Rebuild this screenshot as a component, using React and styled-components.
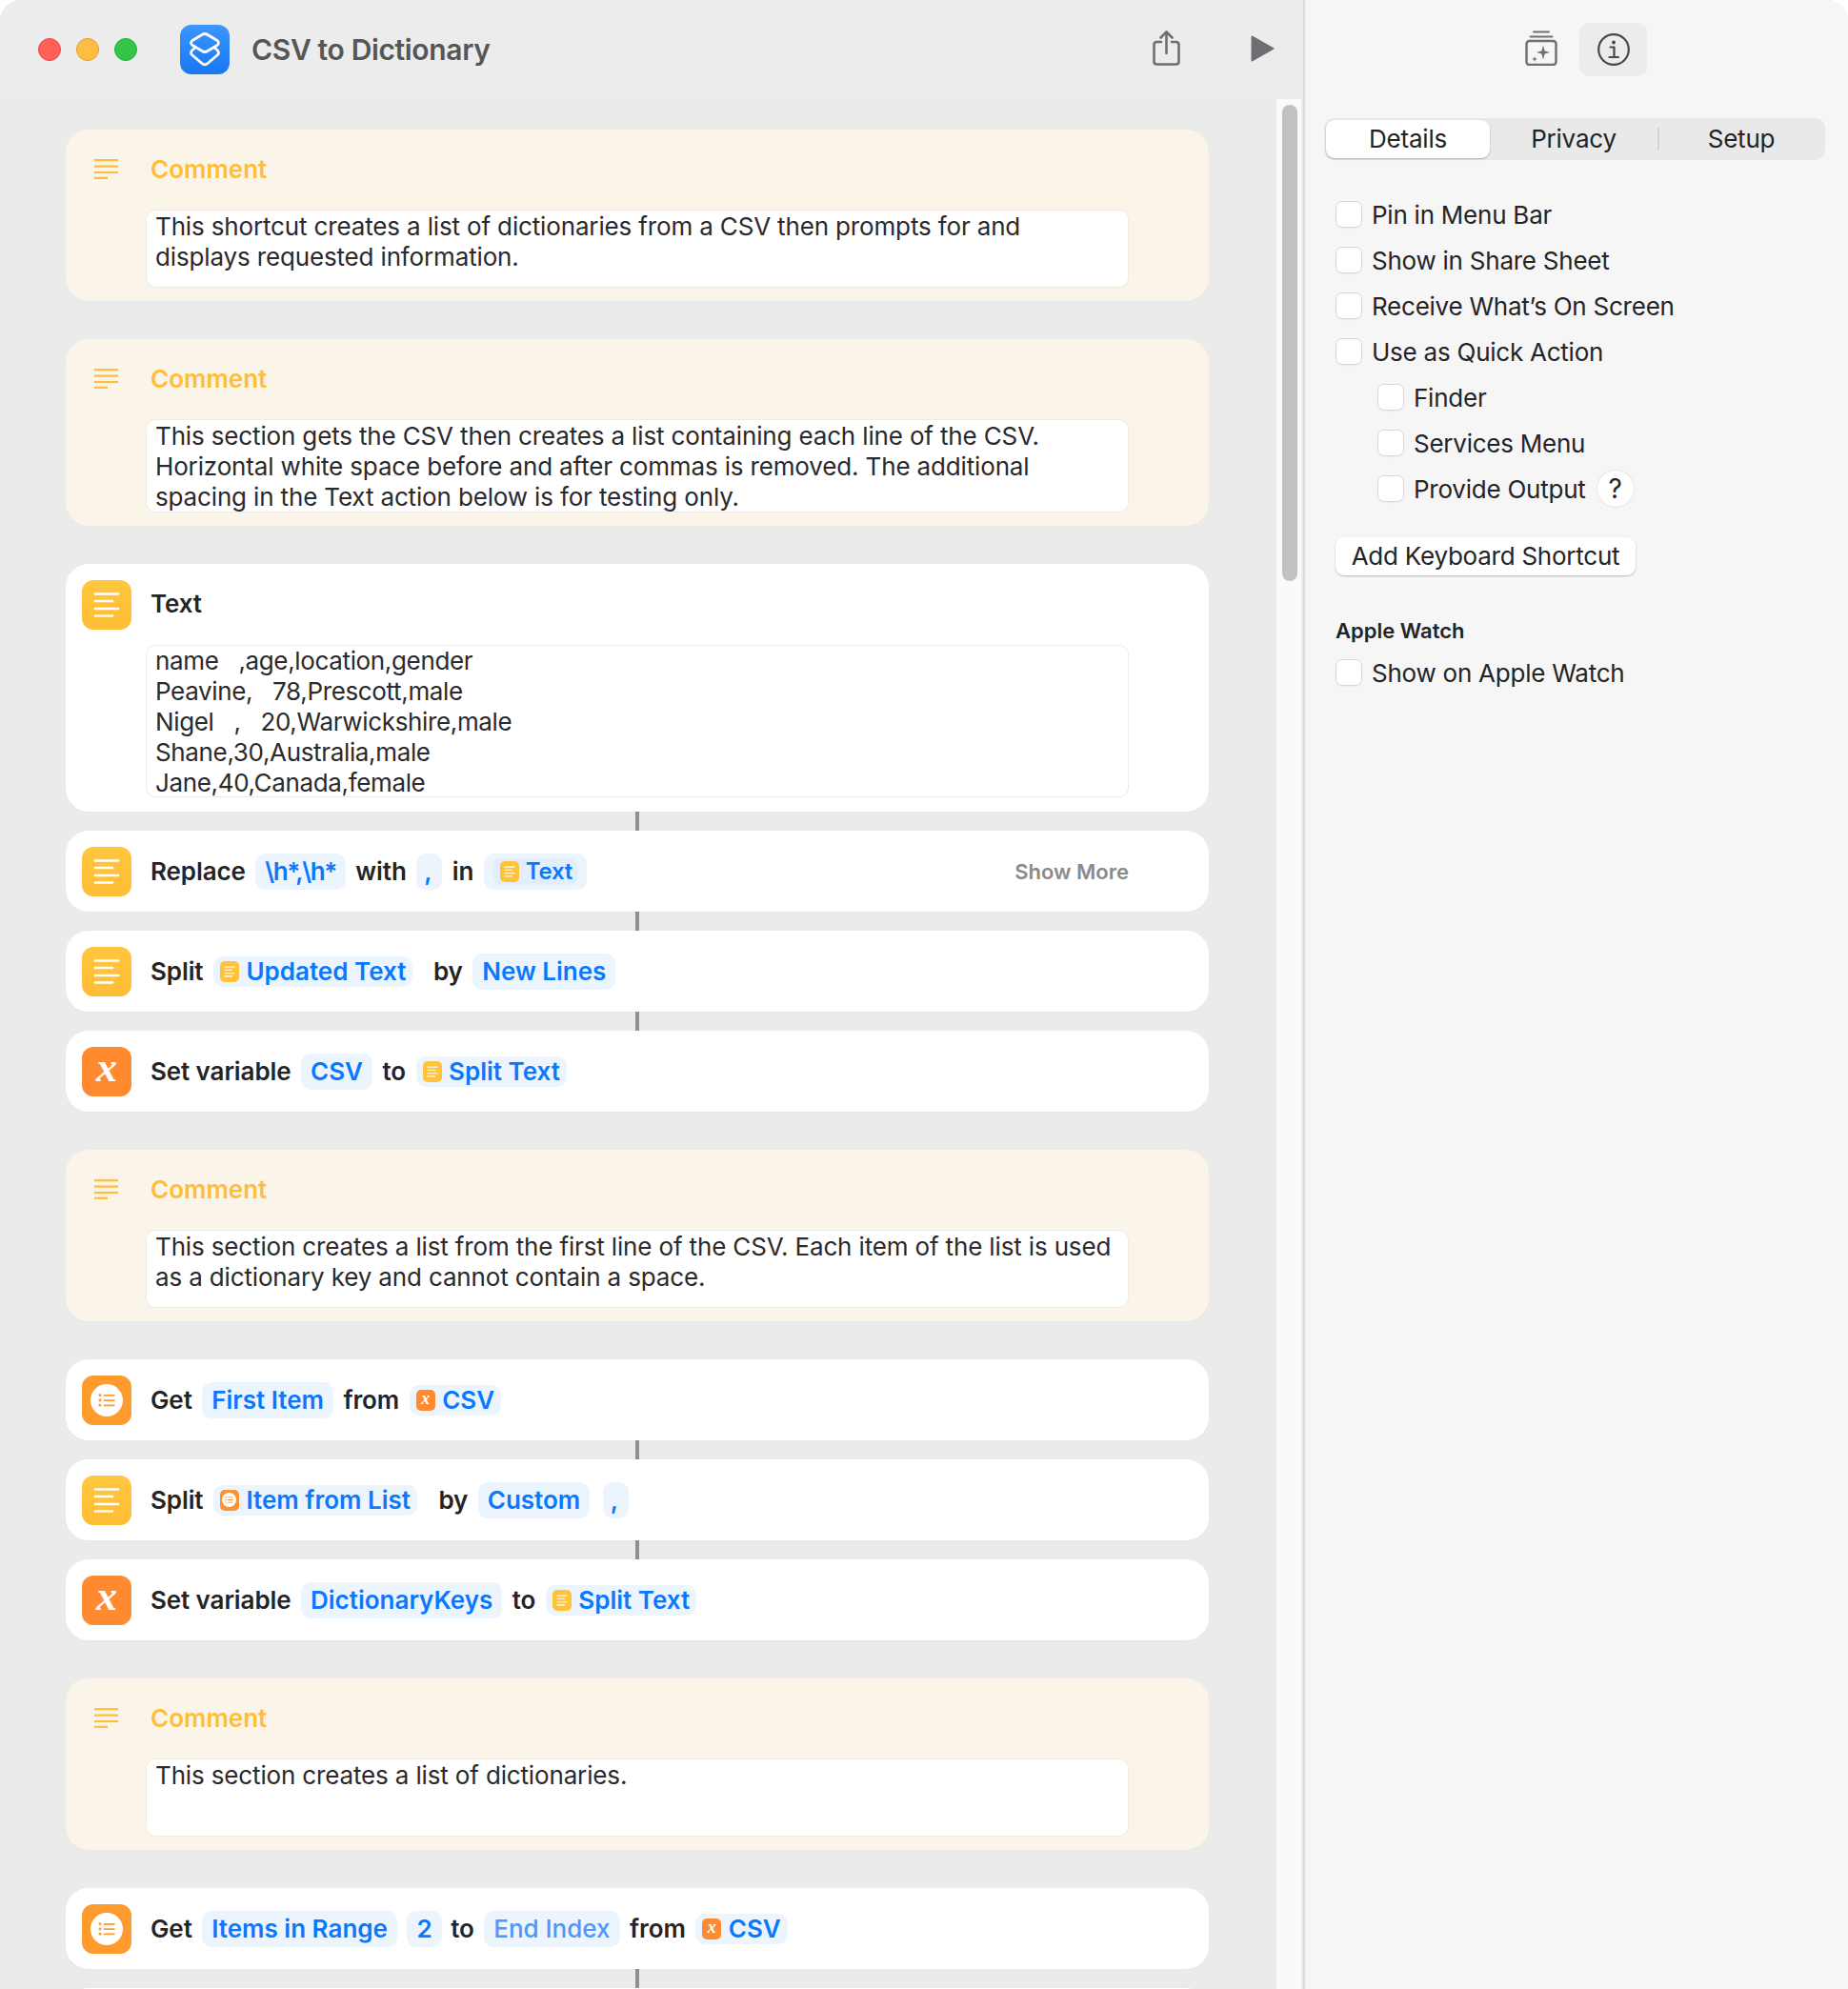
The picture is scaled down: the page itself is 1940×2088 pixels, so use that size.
import React from 'react'
import styled, { createGlobalStyle } from 'styled-components'

const GlobalStyle = createGlobalStyle`
  html, body {
    margin: 0;
    padding: 0;
    background: #fff;
  }
  * {
    box-sizing: border-box;
  }
`

const LinesGlyph = () => (
  <svg viewBox="0 0 28 26" width="100%" height="100%">
    <g stroke="currentColor" strokeWidth="2.6" strokeLinecap="round">
      <line x1="2" y1="1.5" x2="26" y2="1.5" />
      <line x1="2" y1="9" x2="20" y2="9" />
      <line x1="2" y1="17" x2="26" y2="17" />
      <line x1="2" y1="24.5" x2="20" y2="24.5" />
    </g>
  </svg>
)

const CommentLines = () => (
  <svg viewBox="0 0 25 21" width="25" height="21">
    <g stroke="currentColor" strokeWidth="2.2">
      <line x1="0" y1="1.2" x2="25" y2="1.2" />
      <line x1="0" y1="7.6" x2="25" y2="7.6" />
      <line x1="0" y1="14" x2="25" y2="14" />
      <line x1="0" y1="19.8" x2="14" y2="19.8" />
    </g>
  </svg>
)

const ListGlyph = () => (
  <svg viewBox="0 0 20 16" width="100%" height="100%">
    <g fill="currentColor">
      <circle cx="2" cy="2" r="1.7" />
      <circle cx="2" cy="8" r="1.7" />
      <circle cx="2" cy="14" r="1.7" />
      <rect x="6" y="1" width="14" height="2" rx="1" />
      <rect x="6" y="7" width="14" height="2" rx="1" />
      <rect x="6" y="13" width="14" height="2" rx="1" />
    </g>
  </svg>
)

function ActionIcon({ kind }) {
  if (kind === 'var') return <VarIcon>x</VarIcon>
  if (kind === 'list') {
    return (
      <ListIcon>
        <ListDisc><ListGlyph /></ListDisc>
      </ListIcon>
    )
  }
  return (
    <TextIcon>
      <TextLines><LinesGlyph /></TextLines>
    </TextIcon>
  )
}

function MiniIcon({ kind }) {
  if (kind === 'var') return <MiniVar>x</MiniVar>
  if (kind === 'list') {
    return (
      <MiniList>
        <MiniDisc><ListGlyph /></MiniDisc>
      </MiniList>
    )
  }
  return (
    <MiniText>
      <MiniLines><LinesGlyph /></MiniLines>
    </MiniText>
  )
}

function VarPill({ icon, after, children }) {
  return (
    <Pill $after={after}>
      <MiniIcon kind={icon} />
      {children}
    </Pill>
  )
}

function Comment({ children }) {
  return (
    <CommentCard>
      <CommentHead>
        <CommentGlyph><CommentLines /></CommentGlyph>
        <CommentTitle>Comment</CommentTitle>
      </CommentHead>
      <TextBox>{children}</TextBox>
    </CommentCard>
  )
}

function Action({ icon, children }) {
  return (
    <ActionCard>
      <ActionIcon kind={icon} />
      {children}
    </ActionCard>
  )
}

function Option({ indent, children, help }) {
  return (
    <OptionRow $indent={indent}>
      <Checkbox />
      <span>{children}</span>
      {help && <HelpButton>?</HelpButton>}
    </OptionRow>
  )
}

export default function App() {
  return (
    <Window>
      <GlobalStyle />
      <Main>
        <Toolbar>
          <Light $color="#ff6058" $border="#e14942" />
          <Light $color="#ffbd44" $border="#dfa023" />
          <Light $color="#34c44a" $border="#28a83a" />
          <AppIcon>
            <svg viewBox="0 0 52 52" width="52" height="52" fill="none" stroke="#fff" strokeWidth="2.8" strokeLinejoin="round" strokeLinecap="round">
              <path d="M23 10.5Q26 8.5 29 10.5L39 16.5Q42 19 39 21.5L29 27.5Q26 29.5 23 27.5L13 21.5Q10 19 13 16.5Z" />
              <path d="M16 24L13 26.5Q10 29.5 13 32L23 40.5Q26 43 29 40.5L39 32Q42 29.5 39 26.5L36 24" />
            </svg>
          </AppIcon>
          <Title>CSV to Dictionary</Title>
          <ShareButton>
            <svg viewBox="0 0 29 37" width="29" height="37" fill="none" stroke="#6e6e73" strokeWidth="2.6" strokeLinecap="round" strokeLinejoin="round">
              <path d="M14.5 24V2M8.5 7.5L14.5 1.5L20.5 7.5" />
              <path d="M9 12H4.5Q1.5 12 1.5 15V32.5Q1.5 35.5 4.5 35.5H24.5Q27.5 35.5 27.5 32.5V15Q27.5 12 24.5 12H20" />
            </svg>
          </ShareButton>
          <PlayButton>
            <svg viewBox="0 0 25 28" width="25" height="28" fill="#6e6e73" stroke="#6e6e73" strokeWidth="2" strokeLinejoin="round">
              <path d="M1.5 1.5L23.5 14L1.5 26.5Z" />
            </svg>
          </PlayButton>
        </Toolbar>
        <Body>
          <List>
            <Comment>This shortcut creates a list of dictionaries from a CSV then prompts for and displays requested information.</Comment>
            <Comment>
              This section gets the CSV then creates a list containing each line of the CSV. Horizontal white space before and after commas is removed. The additional spacing in the Text action below is for testing only.
            </Comment>
            <Group>
              <TextCard>
                <TextCardHead>
                  <ActionIcon kind="text" />
                  <Word>Text</Word>
                </TextCardHead>
                <TextBox>
                  name&nbsp;&nbsp;&nbsp;,age,location,gender<br />
                  Peavine,&nbsp;&nbsp;&nbsp;78,Prescott,male<br />
                  Nigel&nbsp;&nbsp;&nbsp;,&nbsp;&nbsp;&nbsp;20,Warwickshire,male<br />
                  Shane,30,Australia,male<br />
                  Jane,40,Canada,female
                </TextBox>
              </TextCard>
              <Connector />
              <Action icon="text">
                <Word>Replace</Word>
                <Pill $tall $tight>\h*,\h*</Pill>
                <Word>with</Word>
                <Pill $tall $narrow>,</Pill>
                <Word>in</Word>
                <Pill $tall>
                  <InnerToken><MiniIcon kind="text" />Text</InnerToken>
                </Pill>
                <ShowMore>Show More</ShowMore>
              </Action>
              <Connector />
              <Action icon="text">
                <Word>Split</Word>
                <VarPill icon="text" after={11}>Updated Text</VarPill>
                <Word>by</Word>
                <Pill $tall>New Lines</Pill>
              </Action>
              <Connector />
              <Action icon="var">
                <Word>Set variable</Word>
                <Pill $tall>CSV</Pill>
                <Word>to</Word>
                <VarPill icon="text">Split Text</VarPill>
              </Action>
            </Group>
            <Comment>This section creates a list from the first line of the CSV. Each item of the list is used as a dictionary key and cannot contain a space.</Comment>
            <Group>
              <Action icon="list">
                <Word>Get</Word>
                <Pill $tall>First Item</Pill>
                <Word>from</Word>
                <VarPill icon="var">CSV</VarPill>
              </Action>
              <Connector />
              <Action icon="text">
                <Word>Split</Word>
                <VarPill icon="list" after={12}>Item from List</VarPill>
                <Word>by</Word>
                <Pill $tall $after={3}>Custom</Pill>
                <Pill $tall $narrow>,</Pill>
              </Action>
              <Connector />
              <Action icon="var">
                <Word>Set variable</Word>
                <Pill $tall>DictionaryKeys</Pill>
                <Word>to</Word>
                <VarPill icon="text">Split Text</VarPill>
              </Action>
            </Group>
            <Comment>This section creates a list of dictionaries.</Comment>
            <Group>
              <Action icon="list">
                <Word>Get</Word>
                <Pill $tall>Items in Range</Pill>
                <Pill $tall $after={-1}>2</Pill>
                <Word>to</Word>
                <Pill $tall $faded>End Index</Pill>
                <Word>from</Word>
                <VarPill icon="var">CSV</VarPill>
              </Action>
              <Connector />
              <ActionCard />
            </Group>
          </List>
          <ScrollTrack>
            <ScrollThumb />
          </ScrollTrack>
        </Body>
      </Main>
      <Side>
        <SideToolbar>
          <svg viewBox="0 0 34 37" width="34" height="37" fill="none" stroke="#6e6e73" strokeWidth="2" strokeLinecap="round" strokeLinejoin="round">
            <path d="M9 1.5H25M5.5 6.5H28.5" />
            <rect x="1.5" y="11" width="31" height="25" rx="3" strokeWidth="2.4" />
            <path d="M19 15.5L20.6 21.4L26 23L20.6 24.6L19 30.5L17.4 24.6L12 23L17.4 21.4Z" fill="#6e6e73" stroke="none" />
            <path d="M10 27L10.8 29.2L13 30L10.8 30.8L10 33L9.2 30.8L7 30L9.2 29.2Z" fill="#6e6e73" stroke="none" />
          </svg>
          <InfoButton>
            <svg viewBox="0 0 34 34" width="34" height="34" fill="none" stroke="#48484a" strokeWidth="2.2" strokeLinecap="round">
              <circle cx="17" cy="17" r="15.8" />
              <path d="M13.5 14.5H17.5V25M12.5 25H22" strokeLinejoin="round" />
              <circle cx="17" cy="9.5" r="1.9" fill="#48484a" stroke="none" />
            </svg>
          </InfoButton>
        </SideToolbar>
        <Segments>
          <Segment $active $width={172}>Details</Segment>
          <Segment $width={176}>Privacy</Segment>
          <SegmentDivider />
          <Segment $width={172}>Setup</Segment>
        </Segments>
        <Options>
          <Option>Pin in Menu Bar</Option>
          <Option>Show in Share Sheet</Option>
          <Option>Receive What’s On Screen</Option>
          <Option>Use as Quick Action</Option>
          <Option indent>Finder</Option>
          <Option indent>Services Menu</Option>
          <Option indent help>Provide Output</Option>
        </Options>
        <ShortcutButton>Add Keyboard Shortcut</ShortcutButton>
        <SectionTitle>Apple Watch</SectionTitle>
        <Option>Show on Apple Watch</Option>
      </Side>
    </Window>
  )
}

const Window = styled.div`
  width: 1940px;
  height: 2088px;
  display: flex;
  overflow: hidden;
  border-radius: 22px 22px 0 0;
  background: #ebebeb;
  font-family: Inter, "Liberation Sans", sans-serif;
  font-size: 26px;
  color: #242426;
`

const Main = styled.div`
  width: 1370px;
  flex-shrink: 0;
  display: flex;
  flex-direction: column;
  border-right: 2px solid #dcdcdc;
`

const Toolbar = styled.div`
  height: 104px;
  flex-shrink: 0;
  display: flex;
  align-items: center;
  padding-left: 40px;
  padding-right: 30px;
  background: #ececec;
`

const Light = styled.span`
  width: 24px;
  height: 24px;
  margin-right: 16px;
  border-radius: 50%;
  background: ${props => props.$color};
  border: 1px solid ${props => props.$border};
`

const AppIcon = styled.div`
  width: 52px;
  height: 52px;
  margin-left: 29px;
  border-radius: 12px;
  background: linear-gradient(#3c96fc, #1877f2);
  display: flex;
`

const Title = styled.div`
  margin-left: 23px;
  font-size: 30px;
  font-weight: 600;
  letter-spacing: -0.35px;
  color: #565656;
`

const ShareButton = styled.div`
  margin-left: auto;
  display: flex;
  margin-bottom: 3px;
`

const PlayButton = styled.div`
  margin-left: 74px;
  display: flex;
  margin-bottom: 2px;
`

const Body = styled.div`
  flex: 1;
  min-height: 0;
  display: flex;
`

const List = styled.div`
  width: 1340px;
  flex-shrink: 0;
  padding: 32px 71px 0 69px;
  display: flex;
  flex-direction: column;
  gap: 40px;
`

const ScrollTrack = styled.div`
  width: 26px;
  flex-shrink: 0;
  padding: 6px 4px 0 6px;
  background: #fafafa;
`

const ScrollThumb = styled.div`
  height: 500px;
  border-radius: 8px;
  background: #c1c1c1;
`

const Group = styled.div`
  display: flex;
  flex-direction: column;
`

const Connector = styled.div`
  width: 4px;
  height: 20px;
  flex-shrink: 0;
  margin: 0 auto;
  background: #8e8e93;
`

const CommentCard = styled.div`
  padding: 0 84px 14px 84px;
  border-radius: 24px;
  background: #faf4e9;
  box-shadow: 0 1px 3px rgba(0, 0, 0, 0.02);
`

const CommentHead = styled.div`
  height: 84px;
  margin-left: -54px;
  display: flex;
  align-items: center;
  padding-bottom: 2px;
`

const CommentGlyph = styled.div`
  width: 25px;
  height: 21px;
  display: flex;
  color: #ffbd3a;
`

const CommentTitle = styled.div`
  margin-left: 34px;
  font-weight: 600;
  color: #ffbd3a;
`

const TextBox = styled.div`
  min-height: 82px;
  padding: 2px 9px 0 10px;
  border-radius: 10px;
  background: #fff;
  box-shadow: inset 0 0 0 1px #eeeae2;
  line-height: 32px;
  letter-spacing: -0.15px;
  color: #2a2a2c;
`

const TextCard = styled.div`
  padding: 17px 84px 15px 17px;
  border-radius: 24px;
  background: #fff;
  box-shadow: 0 1px 3px rgba(0, 0, 0, 0.02);

  ${TextBox} {
    margin-left: 67px;
    height: 160px;
    padding-top: 1px;
    overflow: hidden;
    letter-spacing: -0.35px;
    box-shadow: inset 0 0 0 1px #ececec;
  }
`

const TextCardHead = styled.div`
  height: 68px;
  display: flex;
  align-items: flex-start;
  gap: 0;

  span {
    line-height: 50px;
  }
`

const ActionCard = styled.div`
  height: 85px;
  flex-shrink: 0;
  padding: 0 84px 0 17px;
  display: flex;
  align-items: center;
  gap: 10.5px;
  border-radius: 24px;
  background: #fff;
  box-shadow: 0 1px 3px rgba(0, 0, 0, 0.02);
`

const IconTile = styled.div`
  width: 52px;
  height: 52px;
  flex-shrink: 0;
  margin-right: 9.5px;
  border-radius: 12px;
  display: flex;
  align-items: center;
  justify-content: center;
  color: #fff;

  ${TextCardHead} & {
    margin-right: 20px;
  }
`

const TextIcon = styled(IconTile)`
  background: linear-gradient(#ffc73f, #ffbd36);
`

const TextLines = styled.div`
  width: 28px;
  height: 26px;
  display: flex;
`

const VarIcon = styled(IconTile)`
  background: #ff8a30;
  font-family: "Liberation Serif", serif;
  font-style: italic;
  font-weight: 700;
  font-size: 44px;
  line-height: 46px;
  padding-bottom: 8px;
`

const ListIcon = styled(IconTile)`
  background: #ff9a2e;
  color: #ff9a2e;
`

const ListDisc = styled.div`
  width: 34px;
  height: 34px;
  padding: 10px 8px;
  border-radius: 50%;
  background: #fff;
  display: flex;
`

const Word = styled.span`
  font-weight: 600;
  letter-spacing: -0.1px;
  color: #242426;
  white-space: nowrap;
`

const Pill = styled.span`
  height: ${props => (props.$tall ? '38px' : '32px')};
  padding: 0 ${props => (props.$tall ? '10px' : '7px')};
  display: inline-flex;
  align-items: center;
  gap: 7.5px;
  margin-right: ${props => props.$after || 0}px;
  border-radius: 10px;
  background: #ecf4fe;
  color: ${props => (props.$faded ? '#4c98fb' : '#0a78fb')};
  font-weight: ${props => (props.$faded ? 500 : 600)};
  letter-spacing: ${props => (props.$tight ? '-1.4px' : '0')};
  white-space: nowrap;
  ${props => props.$narrow && 'padding: 0 8px; min-width: 27px;'}
`

const InnerToken = styled.span`
  height: 28px;
  padding: 0 0 0 7px;
  width: 88px;
  display: inline-flex;
  align-items: center;
  gap: 7px;
  border-radius: 8px;
  background: #e3eefc;
  font-size: 24px;
  letter-spacing: -0.2px;
`

const MiniTile = styled.span`
  width: 20px;
  height: 22px;
  flex-shrink: 0;
  border-radius: 5px;
  display: inline-flex;
  align-items: center;
  justify-content: center;
  color: #fff;
`

const MiniText = styled(MiniTile)`
  background: #ffc23b;
`

const MiniLines = styled.span`
  width: 12px;
  height: 12px;
  display: flex;
`

const MiniVar = styled(MiniTile)`
  background: #ff8a30;
  font-family: "Liberation Serif", serif;
  font-style: italic;
  font-weight: 700;
  font-size: 18px;
  padding-bottom: 3px;
`

const MiniList = styled(MiniTile)`
  background: #ff9230;
  color: #ff9230;
`

const MiniDisc = styled.span`
  width: 15px;
  height: 15px;
  padding: 4px 3px;
  border-radius: 50%;
  background: #fff;
  display: flex;
`

const ShowMore = styled.span`
  margin-left: auto;
  font-size: 22px;
  font-weight: 600;
  color: #8a8a8c;
`

const Side = styled.div`
  flex: 1;
  padding: 0 24px 0 32px;
  background: #f6f6f6;
`

const SideToolbar = styled.div`
  height: 104px;
  margin-left: 199px;
  display: flex;
  align-items: center;
  gap: 23px;

  > svg {
    margin-bottom: 3px;
  }
`

const InfoButton = styled.div`
  width: 71px;
  height: 56px;
  border-radius: 10px;
  background: #ececec;
  display: flex;
  align-items: center;
  justify-content: center;
`

const Segments = styled.div`
  width: 526px;
  height: 44px;
  margin: 20px 0 0 -12px;
  padding: 2px;
  display: flex;
  align-items: center;
  border-radius: 10px;
  background: #e9e9e9;
`

const Segment = styled.div`
  width: ${props => props.$width}px;
  height: 40px;
  padding-bottom: 2px;
  display: flex;
  align-items: center;
  justify-content: center;
  border-radius: 9px;
  letter-spacing: -0.2px;
  background: ${props => (props.$active ? '#fff' : 'transparent')};
  box-shadow: ${props => (props.$active ? '0 1px 2px rgba(0, 0, 0, 0.25)' : 'none')};
`

const SegmentDivider = styled.div`
  width: 2px;
  height: 24px;
  background: #d5d5d5;
`

const Options = styled.div`
  margin-top: 33px;
`

const OptionRow = styled.div`
  height: 48px;
  display: flex;
  align-items: center;
  gap: 10px;
  padding-left: ${props => (props.$indent ? '44px' : '0')};
  letter-spacing: -0.24px;
`

const Checkbox = styled.span`
  width: 28px;
  height: 28px;
  flex-shrink: 0;
  border: 1px solid #d8d8d8;
  border-radius: 7px;
  background: #fff;
  box-shadow: 0 1px 1px rgba(0, 0, 0, 0.04);
`

const HelpButton = styled.span`
  width: 38px;
  height: 38px;
  margin-left: 2px;
  border-radius: 50%;
  background: #fff;
  display: flex;
  align-items: center;
  justify-content: center;
  font-size: 28px;
  box-shadow: 0 0 2px rgba(0, 0, 0, 0.18);
`

const ShortcutButton = styled.div`
  width: 315px;
  height: 40px;
  margin-top: 27px;
  padding-bottom: 2px;
  display: flex;
  align-items: center;
  justify-content: center;
  border-radius: 9px;
  background: #fff;
  box-shadow: 0 1px 2px rgba(0, 0, 0, 0.25);
  letter-spacing: -0.24px;
  white-space: nowrap;
`

const SectionTitle = styled.div`
  margin-top: 43px;
  margin-bottom: 5px;
  font-size: 22px;
  line-height: 30px;
  font-weight: 600;
`
